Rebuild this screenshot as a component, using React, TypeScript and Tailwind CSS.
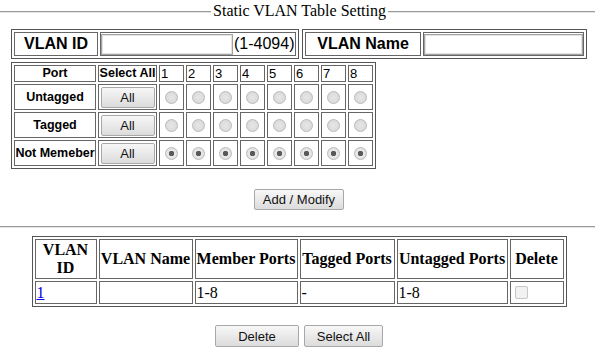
import React from 'react'

const ports = [1, 2, 3, 4, 5, 6, 7, 8]

const rows = [
  { label: 'Untagged', checked: false },
  { label: 'Tagged', checked: false },
  { label: 'Not Memeber', checked: true },
]

const btn =
  'border border-[#a8a8a8] rounded-[2px] bg-linear-to-b from-[#f7f7f7] to-[#dcdcdc] text-[13px] text-[#111] leading-none flex items-center justify-center'

function Radio({ name, checked }: { name: string; checked: boolean }) {
  return (
    <input
      type="radio"
      name={name}
      disabled
      defaultChecked={checked}
      className="appearance-none m-0 w-[13px] h-[13px] rounded-full border border-[#b9b9b9] bg-[radial-gradient(circle,#e6e6e6_0,#d6d6d6_100%)] checked:bg-[radial-gradient(circle,#5a5a5a_0_2.5px,#e9e9e9_3px,#dadada_100%)]"
    />
  )
}

function GrooveLine({ className = '' }: { className?: string }) {
  return <div className={'h-[2px] border-t border-[#9a9a9a] border-b border-b-[#e4e4e4] ' + className} />
}

export default function App() {
  return (
    <div className="w-[595px] h-[354px] overflow-hidden bg-white text-black font-['Liberation_Sans',Arial,sans-serif]">
      {/* legend */}
      <div className="flex h-[22px] items-start">
        <GrooveLine className="flex-1 mt-[11px]" />
        <span className="px-[2px] mt-[2px] text-[16px] leading-[18px] font-['Liberation_Serif','Times_New_Roman',serif]">
          Static VLAN Table Setting
        </span>
        <GrooveLine className="w-[207px] mt-[11px]" />
      </div>

      <div className="pl-[11px] w-[587px]">
        {/* VLAN ID / name */}
        <div className="flex gap-[3px] mt-[7px]">
          <table className="border-separate border-spacing-[2px] border border-[#555]">
            <tbody>
              <tr>
                <td className="border border-[#666] p-0">
                  <div className="w-[82px] h-[22px] flex items-center justify-center font-bold text-[16px]">VLAN ID</div>
                </td>
                <td className="border border-[#666] p-0">
                  <div className="w-[194px] h-[22px] flex items-center pl-[0px]">
                    <input className="w-[132px] h-[21px] border border-[#a3a3a3] shadow-[inset_0_0_0_1px_#e2e2e2] outline-none" />
                    <span className="text-[16px] ml-[1px]">(1-4094)</span>
                  </div>
                </td>
              </tr>
            </tbody>
          </table>
          <table className="border-separate border-spacing-[2px] border border-[#555]">
            <tbody>
              <tr>
                <td className="border border-[#666] p-0">
                  <div className="w-[114px] h-[22px] flex items-center justify-center font-bold text-[16px]">VLAN Name</div>
                </td>
                <td className="border border-[#666] p-0">
                  <div className="w-[159px] h-[22px] flex items-center">
                    <input className="w-[159px] h-[21px] border border-[#a3a3a3] shadow-[inset_0_0_0_1px_#e2e2e2] outline-none" />
                  </div>
                </td>
              </tr>
            </tbody>
          </table>
        </div>

        {/* port membership */}
        <table className="mt-[3px] border-separate border-spacing-[2px] border border-[#555]">
          <tbody>
            <tr>
              <td className="border border-[#666] p-0">
                <div className="w-[80px] h-[15px] flex items-center justify-center font-bold text-[12.5px]">Port</div>
              </td>
              <td className="border border-[#666] p-0">
                <div className="w-[57px] h-[15px] flex items-center justify-center font-bold text-[12.5px] whitespace-nowrap">Select All</div>
              </td>
              {ports.map(p => (
                <td key={p} className="border border-[#666] p-0">
                  <div className="w-[23px] h-[15px] flex items-center pl-[1px] text-[13px]">{p}</div>
                </td>
              ))}
            </tr>
            {rows.map(r => (
              <tr key={r.label}>
                <td className="border border-[#666] p-0">
                  <div className="w-[80px] h-[24px] flex items-center justify-center font-bold text-[12.5px] whitespace-nowrap">{r.label}</div>
                </td>
                <td className="border border-[#666] p-0">
                  <div className="w-[57px] h-[24px] flex items-center justify-center">
                    <button className={btn + ' w-[54px] h-[21px]'}>All</button>
                  </div>
                </td>
                {ports.map(p => (
                  <td key={p} className="border border-[#666] p-0">
                    <div className="w-[23px] h-[24px] flex items-center justify-center">
                      <Radio name={'port' + p} checked={r.checked} />
                    </div>
                  </td>
                ))}
              </tr>
            ))}
          </tbody>
        </table>

        <div className="flex justify-center mt-[20px]">
          <button className={btn + ' w-[90px] h-[21px]'}>Add / Modify</button>
        </div>
      </div>

      <GrooveLine className="mt-[16px]" />

      {/* VLAN list */}
      <div className="pl-[11px] w-[587px] flex justify-center mt-[8px]">
        <table className="border-separate border-spacing-[2px] border border-[#555] font-['Liberation_Serif','Times_New_Roman',serif] text-[16px]">
          <tbody>
            <tr className="font-bold">
              <td className="border border-[#666] p-0">
                <div className="w-[60px] h-[38px] flex items-center justify-center text-center leading-[18px]">VLAN ID</div>
              </td>
              {[
                ['VLAN Name', 'w-[92px]'],
                ['Member Ports', 'w-[101px]'],
                ['Tagged Ports', 'w-[93px]'],
                ['Untagged Ports', 'w-[109px]'],
                ['Delete', 'w-[52px]'],
              ].map(([t, w]) => (
                <td key={t} className="border border-[#666] p-0">
                  <div className={w + ' h-[38px] flex items-center justify-center whitespace-nowrap'}>{t}</div>
                </td>
              ))}
            </tr>
            <tr>
              <td className="border border-[#666] p-0">
                <div className="w-[60px] h-[21px] flex items-center pl-[1px]">
                  <a href="#" className="text-[#0000ee] underline">1</a>
                </div>
              </td>
              <td className="border border-[#666] p-0">
                <div className="w-[92px] h-[21px]" />
              </td>
              <td className="border border-[#666] p-0">
                <div className="w-[101px] h-[21px] flex items-center pl-[1px]">1-8</div>
              </td>
              <td className="border border-[#666] p-0">
                <div className="w-[93px] h-[21px] flex items-center pl-[1px]">-</div>
              </td>
              <td className="border border-[#666] p-0">
                <div className="w-[109px] h-[21px] flex items-center pl-[1px]">1-8</div>
              </td>
              <td className="border border-[#666] p-0">
                <div className="w-[52px] h-[21px] flex items-center pl-[4px]">
                  <input
                    type="checkbox"
                    disabled
                    className="appearance-none m-0 w-[13px] h-[13px] rounded-[2px] border border-[#c6c6c6] bg-[#f2f2f2]"
                  />
                </div>
              </td>
            </tr>
          </tbody>
        </table>
      </div>

      <div className="pl-[11px] w-[587px] flex justify-center gap-[5px] mt-[18px]">
        <button className={btn + ' w-[84px] h-[22px]'}>Delete</button>
        <button className={btn + ' w-[79px] h-[22px]'}>Select All</button>
      </div>
    </div>
  )
}
